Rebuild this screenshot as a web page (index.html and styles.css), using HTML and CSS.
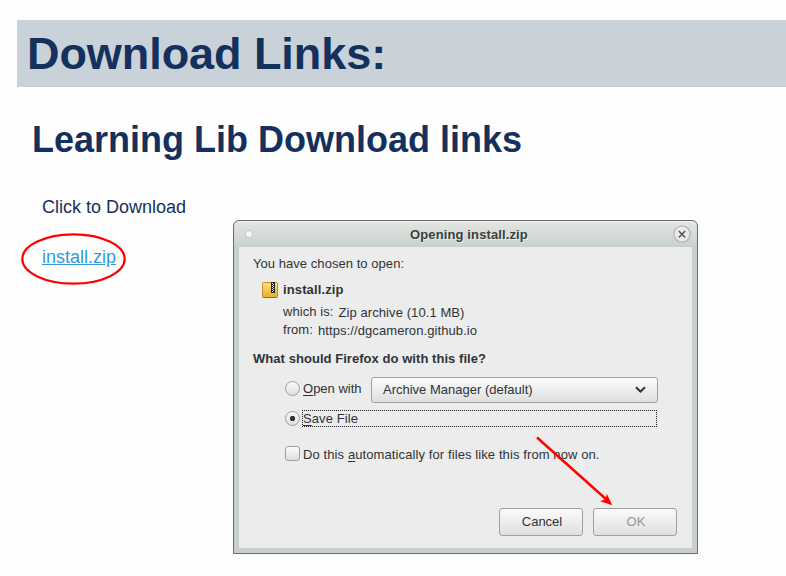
FILE: index.html
```html
<!DOCTYPE html>
<html lang="en">
<head>
<meta charset="utf-8">
<title>Download Links</title>
<link rel="stylesheet" href="styles.css">
</head>
<body>
<main class="page">
  <h1 class="banner">Download Links:</h1>
  <h2 class="subtitle">Learning Lib Download links</h2>
  <p class="text">Click to Download</p>
  <p class="text link-row"><a class="link" href="#">install.zip</a></p>
</main>

<section class="dialog">
  <header class="titlebar">
    <span class="dot"></span>
    <span class="title">Opening install.zip</span>
    <svg class="close" width="18" height="18" viewBox="0 0 18 18">
      <circle cx="9" cy="9" r="8.1" fill="#e9eae9" stroke="#b6b6b6" stroke-width="1.3"/>
      <path d="M5.8 6l6.4 6.4M12.2 6l-6.4 6.4" stroke="#4c504e" stroke-width="1.4"/>
    </svg>
  </header>
  <div class="content">
    <p class="intro">You have chosen to open:</p>
    <div class="file">
      <svg width="16" height="16" viewBox="0 0 16 16">
        <defs><linearGradient id="g" x1="0" y1="0" x2="0" y2="1"><stop offset="0" stop-color="#fae27c"/><stop offset="1" stop-color="#e8ab2c"/></linearGradient></defs>
        <rect x=".5" y=".5" width="15" height="15" rx="1" fill="url(#g)" stroke="#c38f27"/>
        <path d="M1 15.5h14" stroke="#9c6c12"/>
        <path d="M9 0h4v11H9z" fill="#222"/>
        <path d="M10.5 1v9M11.5 2v8" stroke="#ddd" stroke-dasharray="1 1"/>
      </svg>
      <b>install.zip</b>
    </div>
    <div class="meta"><span class="key">which is:</span><span class="value">Zip archive (10.1 MB)</span></div>
    <div class="meta"><span class="key">from:</span><span class="value">https://dgcameron.github.io</span></div>
    <p class="question">What should Firefox do with this file?</p>
    <div class="option open">
      <span class="radio"></span>
      <span class="label"><u>O</u>pen with</span>
      <div class="select"><span>Archive Manager (default)</span>
        <svg width="11" height="8" viewBox="0 0 11 8"><path d="M1 1.3l4.5 4.4L10 1.3" fill="none" stroke="#2e3436" stroke-width="2"/></svg>
      </div>
    </div>
    <div class="option save">
      <span class="radio checked"></span>
      <span class="focus"><u>S</u>ave File</span>
    </div>
    <div class="option auto">
      <span class="checkbox"></span>
      <span class="label">Do this <u>a</u>utomatically for files like this from now on.</span>
    </div>
    <div class="buttons">
      <button class="button">Cancel</button>
      <button class="button" disabled>OK</button>
    </div>
  </div>
</section>

<svg class="marks" width="786" height="576" viewBox="0 0 786 576">
  <ellipse cx="73.5" cy="259" rx="51.2" ry="24.6" fill="none" stroke="#f00" stroke-width="2.2"/>
  <path d="M537 437.5L607 500" stroke="#f00" stroke-width="2.4"/>
  <path d="M612.3 505.3L600.2 501.2L605.5 499.3L606.8 493.8Z" fill="#f00"/>
</svg>
</body>
</html>
```
FILE: styles.css
```css
* { box-sizing: border-box; }
body {
  margin: 0;
  width: 786px;
  height: 576px;
  overflow: hidden;
  background: #fefefe;
  color: #14315d;
  font-family: "Liberation Sans", Arial, sans-serif;
}
h1, h2, p { margin: 0; }
.page { padding: 20px 0 0 17px; }
.banner {
  height: 67px;
  padding-left: 10px;
  background: #c9d1d9;
  font-size: 45px;
  line-height: 67px;
  letter-spacing: -0.06px;
}
.subtitle {
  margin-top: 32px;
  padding-left: 15px;
  font-size: 36px;
  line-height: 42px;
}
.text {
  margin-top: 36px;
  padding-left: 25px;
  font-size: 18px;
  line-height: 20px;
}
.link-row { margin-top: 30px; }
.link { color: #3498db; }

.dialog {
  position: absolute;
  left: 233px;
  top: 220px;
  width: 465px;
  height: 334px;
  padding: 0 5px 5px;
  border: 1px solid #666b68;
  border-radius: 6px 6px 0 0;
  background: linear-gradient(#e3e6e4, #c9d0cb 26px);
  box-shadow: inset 0 1px #f1f2f1;
  color: #2e3436;
  font-size: 13px;
  line-height: 15px;
  letter-spacing: 0.05px;
}
.titlebar {
  display: flex;
  align-items: center;
  justify-content: space-between;
  height: 26px;
  padding: 0 1px 0 6px;
}
.dot {
  width: 8px;
  height: 8px;
  margin-right: 12px;
  border: 1px solid #c4c8c5;
  border-radius: 50%;
  background: #f7f7f7;
}
.title {
  color: #3b3e3c;
  font-weight: bold;
  letter-spacing: 0.12px;
  text-shadow: 1px 1px #e9ece9;
}
.content {
  height: 301px;
  padding: 9px 15px 0 14px;
  background: #ececec;
}
.file {
  display: flex;
  gap: 5px;
  height: 16px;
  margin: 11px 0 6px 9px;
  letter-spacing: 0.12px;
}
.meta {
  display: flex;
  gap: 5px;
  height: 18px;
  padding-left: 30px;
  letter-spacing: 0.09px;
}
.meta .key { letter-spacing: 0.06px; }
.value { padding-top: 1px; }
.question { margin-top: 11px; font-weight: bold; }
.option { display: flex; padding-left: 32px; }
.open { margin-top: 11px; height: 26px; letter-spacing: 0; }
.open .radio, .open .label { margin-top: 4px; }
.save { margin-top: 7px; letter-spacing: 0.1px; }
.save .radio { margin-top: 1px; margin-right: 2px; }
.auto { margin-top: 19px; letter-spacing: 0.1px; }
.auto .label { margin-top: 1px; }
.radio, .checkbox {
  flex: none;
  width: 15px;
  height: 15px;
  margin-right: 3px;
  border: 1px solid #a0a0a0;
  border-radius: 50%;
  background: linear-gradient(#fafafa, #dedede);
}
.checkbox { border-radius: 3px; }
.checked { background: radial-gradient(circle, #2e3436 2.3px, transparent 3px), linear-gradient(#fafafa, #dedede); }
.label { width: 68px; white-space: nowrap; }
u { text-underline-offset: 2px; }
.focus {
  width: 355px;
  height: 17px;
  border: 1px dotted #222;
}
.select {
  display: flex;
  align-items: center;
  justify-content: space-between;
  width: 287px;
  height: 26px;
  padding: 0 11px 1px;
  border: 1px solid #a0a0a0;
  border-radius: 3px;
  background: linear-gradient(#fbfbfb, #dfdfdf);
}
.buttons {
  display: flex;
  justify-content: flex-end;
  gap: 10px;
  margin-top: 46px;
}
.button {
  width: 84px;
  height: 28px;
  padding: 0 0 1px 2px;
  border: 1px solid #a0a0a0;
  border-radius: 3px;
  background: linear-gradient(#fbfbfb, #dfdfdf);
  color: #2e3436;
  font: 13px/15px "Liberation Sans", Arial, sans-serif;
}
.button:disabled { color: #949696; }
.marks {
  position: absolute;
  left: 0;
  top: 0;
  pointer-events: none;
}
```
